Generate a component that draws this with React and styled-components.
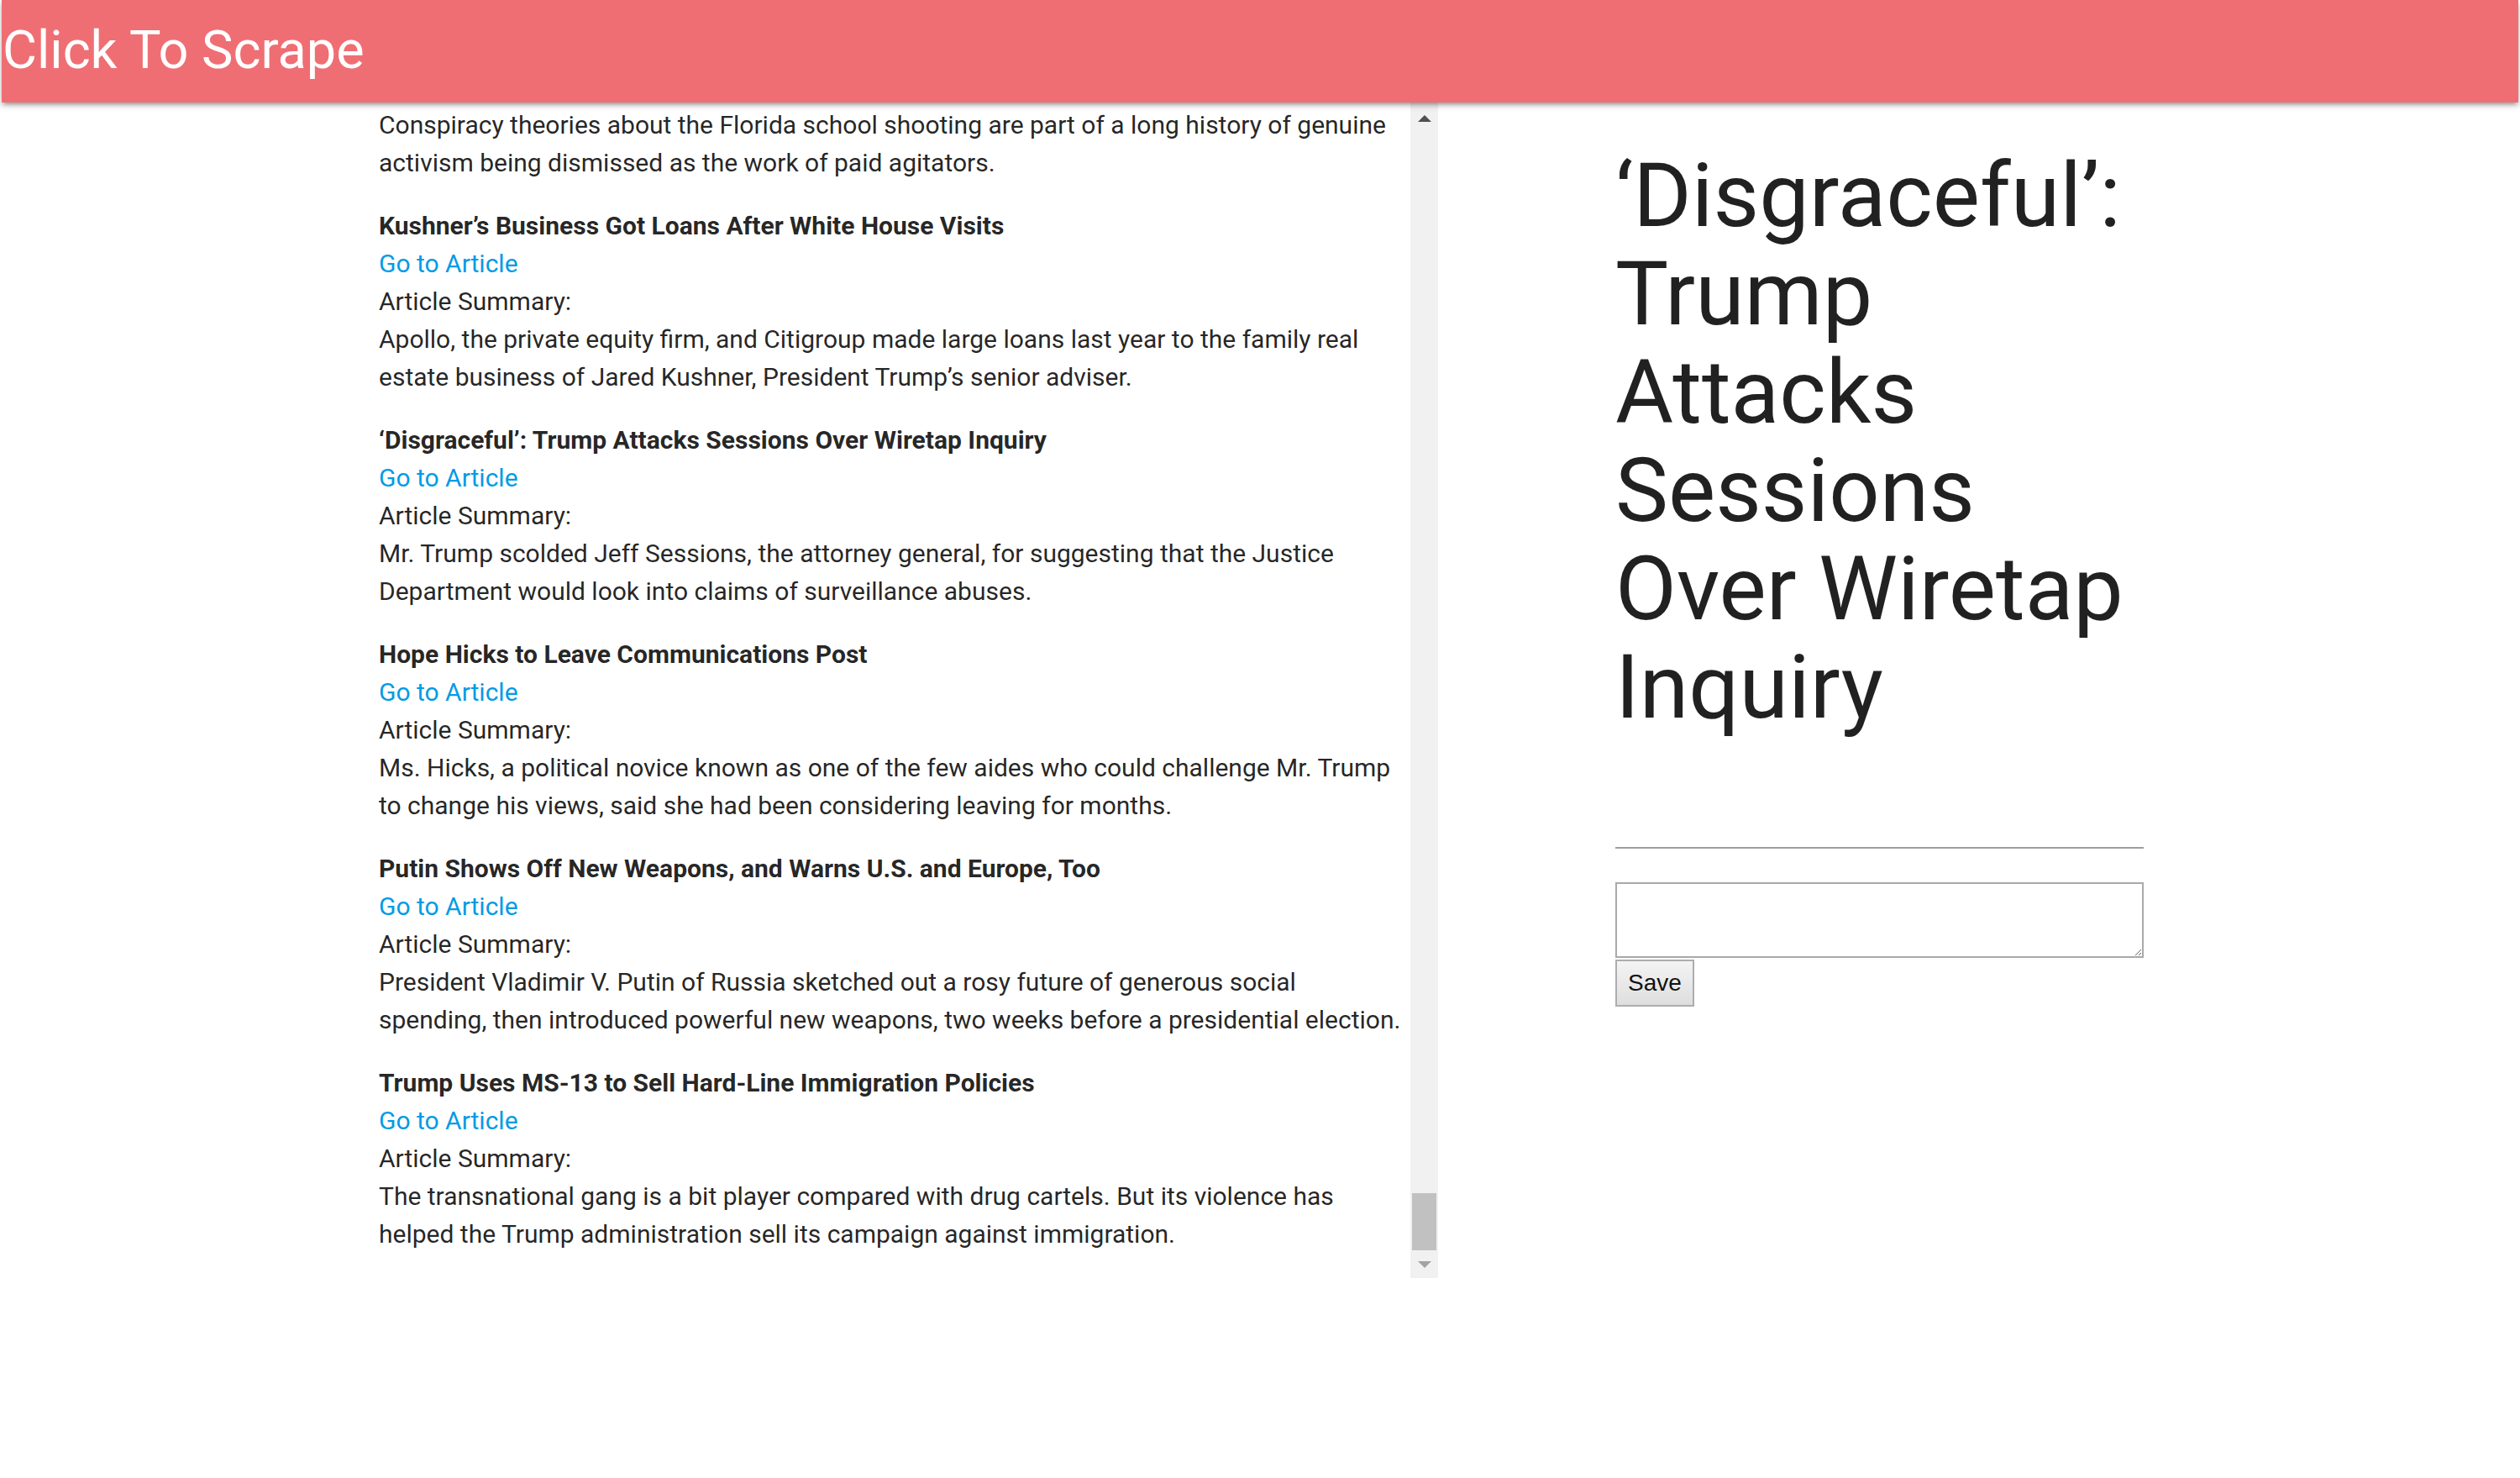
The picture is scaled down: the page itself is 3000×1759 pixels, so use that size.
import React, { useLayoutEffect, useRef } from 'react';
import styled, { createGlobalStyle } from 'styled-components';

const GlobalStyle = createGlobalStyle`
  html, body {
    margin: 0;
    padding: 0;
    background: #fff;
  }
  body {
    font-family: Roboto, "Liberation Sans", sans-serif;
    color: rgba(0, 0, 0, 0.87);
  }
`;

const Nav = styled.nav`
  position: relative;
  z-index: 2;
  height: 122px;
  margin: 0 2px;
  background: #ef6e74;
  box-shadow: 0 4px 4px 0 rgba(0, 0, 0, 0.14), 0 6px 2px -4px rgba(0, 0, 0, 0.12),
    0 2px 10px 0 rgba(0, 0, 0, 0.2);
`;

const Brand = styled.a`
  display: inline-block;
  padding-left: 1px;
  font-size: 63px;
  line-height: 120px;
  color: #fff;
  text-decoration: none;
  cursor: pointer;
`;

const Main = styled.main`
  display: flex;
  align-items: flex-start;
`;

const ListPanel = styled.section`
  flex: none;
  display: flex;
  width: 1261px;
  height: 1399px;
  margin-left: 451px;
`;

const ArticleList = styled.div`
  flex: 1;
  overflow: hidden;
  padding-right: 6px;
  font-size: 30px;
  line-height: 45px;
`;

const ScrollBar = styled.div`
  flex: none;
  display: flex;
  flex-direction: column;
  width: 33px;
  background: #f1f1f1;
`;

const ArrowButton = styled.div`
  flex: none;
  display: flex;
  align-items: center;
  justify-content: center;
  height: 33px;
  padding-top: ${(p) => (p.$active ? '4px' : '0')};
  box-sizing: border-box;
  color: ${(p) => (p.$active ? '#505050' : '#a3a3a3')};
`;

const Track = styled.div`
  flex: 1;
  display: flex;
  flex-direction: column;
  justify-content: flex-end;
  padding: 0 2px;
`;

const Thumb = styled.div`
  height: 68px;
  background: #c1c1c1;
`;

const Article = styled.div`
  margin-bottom: 30px;
`;

const Title = styled.div`
  font-weight: 700;
`;

const ArticleLink = styled.a`
  display: block;
  color: #039be5;
  text-decoration: none;
`;

const Line = styled.div``;

const Side = styled.aside`
  flex: none;
  width: 629px;
  margin-left: 211px;
`;

const Heading = styled.h1`
  margin: 53px 0 47px;
  font-size: 106px;
  line-height: 117px;
  font-weight: 400;
`;

const NoteTitle = styled.input`
  display: block;
  box-sizing: border-box;
  width: 100%;
  height: 86px;
  margin: 0 0 40px;
  padding: 0;
  border: none;
  border-bottom: 2px solid #9e9e9e;
  outline: none;
  background: transparent;
  font: inherit;
  font-size: 28.7px;
`;

const NoteBody = styled.textarea`
  display: block;
  box-sizing: border-box;
  width: 100%;
  height: 90px;
  margin: 0 0 2px;
  border: 2px solid #a9a9a9;
  outline: none;
  background: #fff;
`;

const SaveButton = styled.button`
  display: block;
  box-sizing: border-box;
  width: 94px;
  height: 56px;
  padding: 0;
  border: 2px solid #adadad;
  background: linear-gradient(#f4f4f4, #dedede);
  color: #111;
  font-family: "Liberation Sans", Arial, sans-serif;
  font-size: 28px;
`;

const Arrow = ({ up }) => (
  <svg width="16" height="8" viewBox="0 0 16 8">
    <polygon points={up ? '0,8 8,0 16,8' : '0,0 16,0 8,8'} fill="currentColor" />
  </svg>
);

const articles = [
  {
    title: 'Calling Activists ‘Paid Protesters’ Is an Old Tactic',
    summary:
      'Conspiracy theories about the Florida school shooting are part of a long history of genuine activism being dismissed as the work of paid agitators.',
  },
  {
    title: 'Kushner’s Business Got Loans After White House Visits',
    summary:
      'Apollo, the private equity firm, and Citigroup made large loans last year to the family real estate business of Jared Kushner, President Trump’s senior adviser.',
  },
  {
    title: '‘Disgraceful’: Trump Attacks Sessions Over Wiretap Inquiry',
    summary:
      'Mr. Trump scolded Jeff Sessions, the attorney general, for suggesting that the Justice Department would look into claims of surveillance abuses.',
  },
  {
    title: 'Hope Hicks to Leave Communications Post',
    summary:
      'Ms. Hicks, a political novice known as one of the few aides who could challenge Mr. Trump to change his views, said she had been considering leaving for months.',
  },
  {
    title: 'Putin Shows Off New Weapons, and Warns U.S. and Europe, Too',
    summary:
      'President Vladimir V. Putin of Russia sketched out a rosy future of generous social spending, then introduced powerful new weapons, two weeks before a presidential election.',
  },
  {
    title: 'Trump Uses MS-13 to Sell Hard-Line Immigration Policies',
    summary:
      'The transnational gang is a bit player compared with drug cartels. But its violence has helped the Trump administration sell its campaign against immigration.',
  },
];

const App = () => {
  const listRef = useRef(null);

  // list is shown scrolled to its end
  useLayoutEffect(() => {
    const el = listRef.current;
    if (el) el.scrollTop = el.scrollHeight;
  }, []);

  return (
    <>
      <GlobalStyle />
      <Nav>
        <Brand>Click To Scrape</Brand>
      </Nav>
      <Main>
        <ListPanel>
          <ArticleList ref={listRef}>
            {articles.map((article) => (
              <Article key={article.title}>
                <Title>{article.title}</Title>
                <ArticleLink href="#">Go to Article</ArticleLink>
                <Line>Article Summary:</Line>
                <Line>{article.summary}</Line>
              </Article>
            ))}
          </ArticleList>
          <ScrollBar>
            <ArrowButton $active>
              <Arrow up />
            </ArrowButton>
            <Track>
              <Thumb />
            </Track>
            <ArrowButton>
              <Arrow />
            </ArrowButton>
          </ScrollBar>
        </ListPanel>
        <Side>
          <Heading>‘Disgraceful’: Trump Attacks Sessions Over Wiretap Inquiry</Heading>
          <NoteTitle type="text" />
          <NoteBody />
          <SaveButton>Save</SaveButton>
        </Side>
      </Main>
    </>
  );
};

export default App;
